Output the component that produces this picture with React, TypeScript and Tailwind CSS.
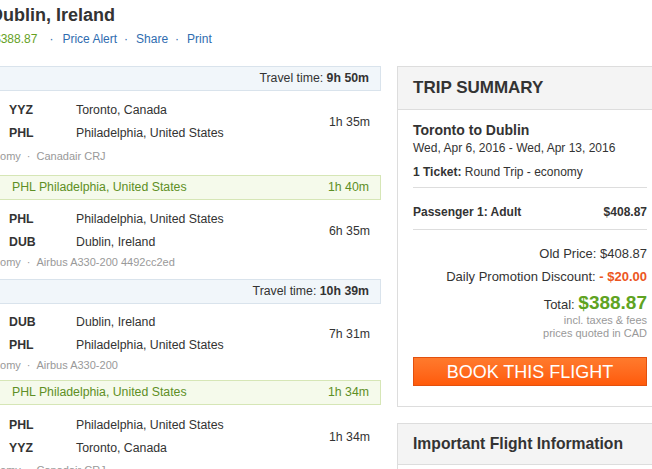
import React from 'react';

type Leg = {
  from: string;
  fromCity: string;
  to: string;
  toCity: string;
  duration: string;
  info: string;
  h: string;
  pt: string;
  infoGap: string;
};

const TravelBar = ({ time }: { time: string }) => (
  <div className="h-[25px] bg-[#f1f6fa] border border-[#d9e3ec] flex items-center justify-end pr-[11px] text-[#333]">
    <span>
      Travel time: <b className="font-bold">{time}</b>
    </span>
  </div>
);

const Layover = ({ code, city, time }: { code: string; city: string; time: string }) => (
  <div className="h-[25px] bg-[#f5faeb] border border-[#d6e6b6] flex items-center justify-between pl-[41px] pr-[11px] text-[#5e8f25]">
    <span>
      {code} {city}
    </span>
    <span>{time}</span>
  </div>
);

const Segment = ({ leg }: { leg: Leg }) => (
  <div className={leg.h + ' ' + leg.pt}>
    <div className="flex items-center pr-[11px]">
      <div className="flex-1 pl-[39px]">
        <div className="flex h-[23px] items-center">
          <span className="w-[67px] font-bold">{leg.from}</span>
          <span>{leg.fromCity}</span>
        </div>
        <div className="flex h-[23px] items-center">
          <span className="w-[67px] font-bold">{leg.to}</span>
          <span>{leg.toCity}</span>
        </div>
      </div>
      <span>{leg.duration}</span>
    </div>
    <div className={'h-[16px] flex items-center pl-[5px] text-[11px] text-[#999] ' + leg.infoGap}>
      Economy <span className="mx-[6px]">·</span> {leg.info}
    </div>
  </div>
);

const legs: Leg[] = [
  { from: 'YYZ', fromCity: 'Toronto, Canada', to: 'PHL', toCity: 'Philadelphia, United States', duration: '1h 35m', info: 'Canadair CRJ', h: 'h-[84px]', pt: 'pt-[8px]', infoGap: 'mt-[3px]' },
  { from: 'PHL', fromCity: 'Philadelphia, United States', to: 'DUB', toCity: 'Dublin, Ireland', duration: '6h 35m', info: 'Airbus A330-200 4492cc2ed', h: 'h-[79px]', pt: 'pt-[8px]', infoGap: 'mt-[0px]' },
  { from: 'DUB', fromCity: 'Dublin, Ireland', to: 'PHL', toCity: 'Philadelphia, United States', duration: '7h 31m', info: 'Airbus A330-200', h: 'h-[76px]', pt: 'pt-[7px]', infoGap: 'mt-[0px]' },
  { from: 'PHL', fromCity: 'Philadelphia, United States', to: 'YYZ', toCity: 'Toronto, Canada', duration: '1h 34m', info: 'Canadair CRJ', h: 'h-[90px]', pt: 'pt-[9px]', infoGap: 'mt-[2px]' },
];

export default function App() {
  return (
    <div
      className="w-[652px] h-[469px] overflow-hidden bg-white text-[#333]"
      style={{ fontFamily: '"Liberation Sans", Arial, sans-serif' }}
    >
      <div className="ml-[-30px] w-[700px]">
        {/* header */}
        <div className="pt-[3px]">
          <h1 className="pl-[20px] text-[18px] leading-[24px] font-bold text-[#333]">Dublin, Ireland</h1>
          <div className="mt-[4px] pl-[24px] flex items-center text-[12px] leading-[16px]">
            <span className="text-[#65a11f]">$388.87</span>
            <span className="ml-[12px] mr-[9px] text-[#2f6db0]">·</span>
            <a className="text-[#2f6db0]">Price Alert</a>
            <span className="ml-[7px] mr-[8px] text-[#2f6db0]">·</span>
            <a className="text-[#2f6db0]">Share</a>
            <span className="ml-[7px] mr-[8px] text-[#2f6db0]">·</span>
            <a className="text-[#2f6db0]">Print</a>
          </div>
        </div>

        <div className="mt-[19px] flex gap-[16px] items-start">
          {/* itinerary */}
          <div className="w-[411px] shrink-0 text-[12.3px] text-[#333]">
            <TravelBar time="9h 50m" />
            <Segment leg={legs[0]} />
            <Layover code="PHL" city="Philadelphia, United States" time="1h 40m" />
            <Segment leg={legs[1]} />
            <TravelBar time="10h 39m" />
            <Segment leg={legs[2]} />
            <Layover code="PHL" city="Philadelphia, United States" time="1h 34m" />
            <Segment leg={legs[3]} />
          </div>

          {/* summary */}
          <div className="w-[266px] shrink-0">
            <div className="border border-[#dddddd]">
              <div className="h-[43px] bg-[#f4f4f4] border-b border-[#dddddd] flex items-center px-[15px]">
                <h2 className="text-[17px] font-bold text-[#333]">TRIP SUMMARY</h2>
              </div>
              <div className="px-[15px] pt-[11px] pb-[20px] text-[12px]">
                <div className="text-[14px] leading-[18px] font-bold">Toronto to Dublin</div>
                <div className="leading-[18px]">Wed, Apr 6, 2016 - Wed, Apr 13, 2016</div>
                <div className="mt-[6px] leading-[18px]">
                  <b className="font-bold">1 Ticket:</b> Round Trip - economy
                </div>
                <div className="mt-[6px] border-t border-[#dddddd]" />
                <div className="mt-[15px] leading-[18px] flex justify-between font-bold">
                  <span>Passenger 1: Adult</span>
                  <span>$408.87</span>
                </div>
                <div className="mt-[8px] border-t border-[#dddddd]" />
                <div className="mt-[15px] text-right text-[13px] leading-[18px]">Old Price: $408.87</div>
                <div className="mt-[5px] text-right text-[13px] leading-[18px]">
                  Daily Promotion Discount: <b className="font-bold text-[#ec5622]">- $20.00</b>
                </div>
                <div className="mt-[7px] text-right text-[13px] leading-[20px]">
                  Total: <b className="text-[19px] font-bold text-[#5fa322]">$388.87</b>
                </div>
                <div className="mt-[-1px] text-right text-[11px] text-[#999] leading-[13px]">incl. taxes &amp; fees</div>
                <div className="text-right text-[11px] text-[#999] leading-[13px]">prices quoted in CAD</div>
                <button className="mt-[17px] w-full h-[29px] bg-linear-to-b from-[#ff7a2c] to-[#ff5a08] border border-[#e2500e] text-white text-[18px] leading-none uppercase">
                  Book this flight
                </button>
              </div>
            </div>

            <div className="mt-[16px] border border-[#dddddd]">
              <div className="h-[41px] bg-[#f4f4f4] border-b border-[#dddddd] flex items-center px-[15px]">
                <h2 className="text-[15.7px] font-bold text-[#333]">Important Flight Information</h2>
              </div>
              <div className="h-[40px]" />
            </div>
          </div>
        </div>
      </div>
    </div>
  );
}
